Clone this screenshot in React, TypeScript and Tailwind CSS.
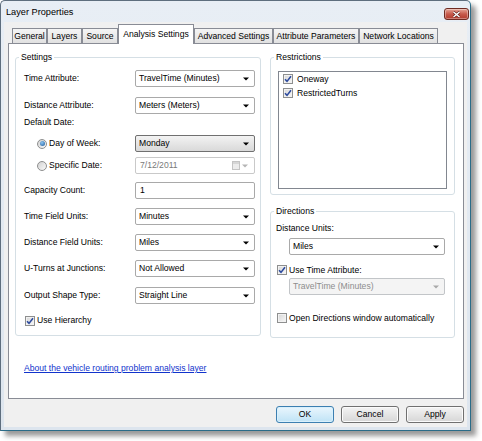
import React from "react";

function Tri({ color = "#000" }: { color?: string }) {
  return (
    <svg width="6" height="4" viewBox="0 0 6 4" className="shrink-0">
      <path d="M0 0.5H6L3 3.5Z" fill={color} />
    </svg>
  );
}

function CheckBox({ checked }: { checked?: boolean }) {
  return (
    <span className="flex h-[10px] w-[10px] shrink-0 items-center justify-center border border-[#8e8f8f] bg-linear-to-br from-[#d6d6d6] to-[#f8f8f8] shadow-[inset_0_0_0_1px_#f2f2f2]">
      {checked && (
        <svg width="8" height="8" viewBox="0 0 8 8">
          <path d="M1 4.3 L3 6.4 L7 1.3" fill="none" stroke="#2c4a9e" strokeWidth="1.6" />
        </svg>
      )}
    </span>
  );
}

function Radio({ checked }: { checked?: boolean }) {
  return (
    <span className="flex h-[10px] w-[10px] shrink-0 items-center justify-center rounded-full border border-[#8e8f8f] bg-linear-to-br from-[#d2d2d2] to-[#fafafa]">
      {checked && (
        <span className="h-[5px] w-[5px] rounded-full bg-[radial-gradient(circle_at_40%_35%,#8cc6f2,#1b5799)]" />
      )}
    </span>
  );
}

function Combo({
  value,
  className = "",
  variant = "normal",
}: {
  value: string;
  className?: string;
  variant?: "normal" | "focus" | "disabled";
}) {
  const look =
    variant === "focus"
      ? "border-[#707070] bg-linear-to-b from-[#f3f3f3] to-[#d9d9d9] text-black"
      : variant === "disabled"
      ? "border-[#c2c5c8] bg-[#f4f4f4] text-[#8d8d8d]"
      : "border-[#a9a9a9] bg-white text-black";
  return (
    <div
      className={`flex h-[17px] shrink-0 items-center justify-between rounded-[2px] border pl-[3px] pr-[5px] ${look} ${className}`}
    >
      <span className="leading-[11px]">{value}</span>
      <Tri color={variant === "disabled" ? "#a8a8a8" : "#000"} />
    </div>
  );
}

function Row({
  label,
  children,
  className = "",
}: {
  label: React.ReactNode;
  children?: React.ReactNode;
  className?: string;
}) {
  return (
    <div className={`flex h-[17px] items-center ${className}`}>
      <div className="flex w-[111px] shrink-0 items-center leading-[11px]">{label}</div>
      {children}
    </div>
  );
}

const tabs: [string, number][] = [
  ["General", 35],
  ["Layers", 35],
  ["Source", 36],
  ["Analysis Settings", 76],
  ["Advanced Settings", 79],
  ["Attribute Parameters", 86],
  ["Network Locations", 79],
];

function Btn({ label, def }: { label: string; def?: boolean }) {
  return (
    <div
      className={`flex h-[17px] w-[58px] items-center justify-center rounded-[3px] border leading-[11px] ${
        def
          ? "border-[#3c7fb1] bg-linear-to-b from-[#eaf6fd] to-[#bfe3f6] shadow-[inset_0_0_0_1px_#d9f0fc]"
          : "border-[#707070] bg-linear-to-b from-[#f4f4f4] to-[#d6d6d6] shadow-[inset_0_0_0_1px_#fbfbfb]"
      }`}
    >
      {label}
    </div>
  );
}

export default function App() {
  return (
    <div className="h-[441px] w-[482px] bg-white font-['Liberation_Sans',Arial,sans-serif] text-[8.6px] text-black">
      <div className="flex h-[431px] w-[471px] flex-col rounded-t-[5px] border border-b-[#2a6c88] border-l-[#5e6e7e] border-r-[#2a6c88] border-t-[#5e6e7e] bg-linear-to-b from-[#e8eef5] to-[#dde5ee] shadow-[5px_5px_5px_rgba(0,0,0,0.4)]">
        {/* title bar */}
        <div className="flex h-[21px] shrink-0 items-start justify-between pl-[5px] pr-[1px]">
          <span className="mt-[6px] text-[9.2px] leading-[11px]">Layer Properties</span>
          <div className="mt-[7px] flex h-[12px] w-[25px] items-center justify-center rounded-[3px] border border-[#6e2b22] bg-linear-to-b from-[#e4a598] via-[#c75a4c] to-[#b23b2d] shadow-[inset_0_0_0_1px_rgba(255,255,255,0.35)]">
            <svg width="9" height="7" viewBox="0 0 9 7">
              <path d="M1.5 1 L7.5 6 M7.5 1 L1.5 6" stroke="#5a1d16" strokeWidth="2.6" />
              <path d="M1.5 1 L7.5 6 M7.5 1 L1.5 6" stroke="#ffffff" strokeWidth="1.5" />
            </svg>
          </div>
        </div>

        {/* client */}
        <div className="mx-[3px] mb-[3px] flex flex-1 flex-col bg-[#f0f0f0]">
          {/* tabs */}
          <div className="mt-[2px] flex h-[19px] items-end pl-[8px]">
            {tabs.map(([t, w]) => {
              const sel = t === "Analysis Settings";
              return (
                <div
                  key={t}
                  style={{ width: w }}
                  className={
                    sel
                      ? "relative z-10 -mb-px flex h-[20px] shrink-0 justify-center border border-b-0 border-[#898c95] bg-white pt-[4px] leading-[11px]"
                      : "flex h-[15px] shrink-0 items-center justify-center border border-b-0 border-[#898c95] bg-linear-to-b from-[#f5f5f5] to-[#e1e1e1] leading-[11px]"
                  }
                >
                  {t}
                </div>
              );
            })}
          </div>

          {/* panel */}
          <div className="ml-[4px] h-[356px] w-[456px] shrink-0 border border-[#898c95] bg-white">
            <div className="flex gap-[9px] pl-[6px] pt-[7px]">
              {/* Settings */}
              <fieldset className="h-[285px] w-[246px] shrink-0 rounded-[3px] border border-[#d5dfe5]">
                <legend className="ml-[3px] px-[2px] leading-[12px]">Settings</legend>
                <div className="flex flex-col pl-[8px] pt-[7px]">
                  <Row label="Time Attribute:">
                    <Combo value="TravelTime (Minutes)" className="w-[120px]" />
                  </Row>
                  <Row label="Distance Attribute:" className="mt-[10px]">
                    <Combo value="Meters (Meters)" className="w-[120px]" />
                  </Row>
                  <Row label="Default Date:" />
                  <Row
                    className="mt-[4px]"
                    label={
                      <span className="flex items-center gap-[2px] pl-[13px]">
                        <Radio checked />
                        Day of Week:
                      </span>
                    }
                  >
                    <Combo value="Monday" variant="focus" className="w-[120px]" />
                  </Row>
                  <Row
                    className="mt-[5px]"
                    label={
                      <span className="flex items-center gap-[2px] pl-[13px]">
                        <Radio />
                        Specific Date:
                      </span>
                    }
                  >
                    <div className="flex h-[17px] w-[120px] shrink-0 items-center justify-between rounded-[2px] border border-[#c9c9c9] bg-white pl-[4px] pr-[6px] text-[#7a7a7a]">
                      <span className="leading-[11px]">7/12/2011</span>
                      <span className="flex items-center gap-[2px]">
                        <svg width="8" height="9" viewBox="0 0 8 9">
                          <rect x="0.5" y="0.5" width="7" height="8" fill="#ececec" stroke="#c4c4c4" />
                          <rect x="1" y="1" width="6" height="2" fill="#d6d6d6" />
                        </svg>
                        <Tri color="#b5b5b5" />
                      </span>
                    </div>
                  </Row>
                  <Row label="Capacity Count:" className="mt-[8px]">
                    <div className="flex h-[17px] w-[120px] shrink-0 items-center rounded-[2px] border border-[#a9a9a9] bg-white pl-[4px] leading-[11px]">
                      1
                    </div>
                  </Row>
                  <Row label="Time Field Units:" className="mt-[9px]">
                    <Combo value="Minutes" className="w-[120px]" />
                  </Row>
                  <Row label="Distance Field Units:" className="mt-[9px]">
                    <Combo value="Miles" className="w-[120px]" />
                  </Row>
                  <Row label="U-Turns at Junctions:" className="mt-[9px]">
                    <Combo value="Not Allowed" className="w-[120px]" />
                  </Row>
                  <Row label="Output Shape Type:" className="mt-[10px]">
                    <Combo value="Straight Line" className="w-[120px]" />
                  </Row>
                  <div className="mt-[8px] flex h-[17px] items-center gap-[2px] pl-[1px] leading-[11px]">
                    <CheckBox checked />
                    Use Hierarchy
                  </div>
                </div>
              </fieldset>

              {/* right column */}
              <div className="flex w-[185px] shrink-0 flex-col">
                <fieldset className="h-[144px] rounded-[3px] border border-[#d5dfe5]">
                  <legend className="ml-[3px] px-[2px] leading-[12px]">Restrictions</legend>
                  <div className="ml-[7px] mt-[8px] h-[118px] w-[169px] border border-[#828790] bg-white">
                    <div className="flex h-[14px] items-center gap-[4px] pl-[4px] leading-[11px]">
                      <CheckBox checked />
                      Oneway
                    </div>
                    <div className="flex h-[14px] items-center gap-[4px] pl-[4px] leading-[11px]">
                      <CheckBox checked />
                      RestrictedTurns
                    </div>
                  </div>
                </fieldset>

                <fieldset className="mt-[10px] h-[133px] rounded-[3px] border border-[#d5dfe5]">
                  <legend className="ml-[3px] px-[2px] leading-[12px]">Directions</legend>
                  <div className="flex flex-col">
                    <div className="mt-[5px] pl-[5px] leading-[12px]">Distance Units:</div>
                    <Combo value="Miles" className="ml-[18px] mt-[4px] w-[156px]" />
                    <div className="mt-[8px] flex h-[14px] items-center gap-[2px] pl-[6px] leading-[11px]">
                      <CheckBox checked />
                      Use Time Attribute:
                    </div>
                    <Combo
                      value="TravelTime (Minutes)"
                      variant="disabled"
                      className="ml-[18px] mt-[1px] w-[156px]"
                    />
                    <div className="mt-[16px] flex h-[14px] items-center gap-[2px] pl-[6px] leading-[11px]">
                      <CheckBox />
                      Open Directions window automatically
                    </div>
                  </div>
                </fieldset>
              </div>
            </div>

            <div className="mt-[25px] pl-[15px] leading-[11px]">
              <span className="text-[#1133cc] underline">
                About the vehicle routing problem analysis layer
              </span>
            </div>
          </div>

          {/* buttons */}
          <div className="mr-[3px] mt-[7px] flex justify-end gap-[7px]">
            <Btn label="OK" def />
            <Btn label="Cancel" />
            <Btn label="Apply" />
          </div>
        </div>
      </div>
    </div>
  );
}
